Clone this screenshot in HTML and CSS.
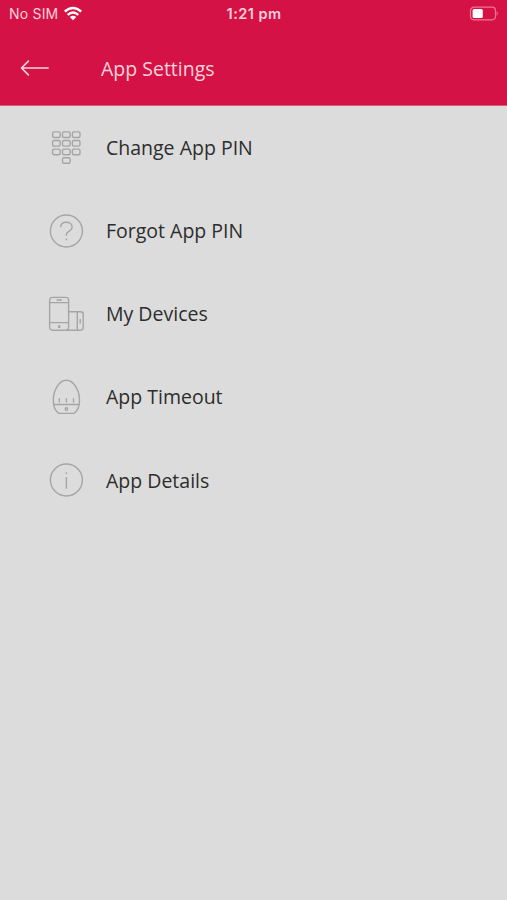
FILE: index.html
```html
<!DOCTYPE html>
<html lang="en">
<head>
<meta charset="utf-8">
<title>App Settings</title>
<link rel="stylesheet" href="styles.css">
</head>
<body>
<header class="header">
  <div class="status">
    <div class="carrier">
      <span>No SIM</span>
      <svg class="wifi" width="20" height="16" viewBox="0 0 20 16"><path d="M1.8 5.5Q10-1.5 18.2 5.5M4.7 8.8Q10 4.3 15.3 8.8" fill="none" stroke="currentColor" stroke-width="2.4"/><path d="M6.8 11.1Q10 8.6 13.2 11.1L10 14.3Z" fill="currentColor"/></svg>
    </div>
    <span class="time">1:21 pm</span>
    <svg class="battery" width="30" height="16" viewBox="0 0 30 16"><rect x="1.5" y="1.2" width="25" height="12.6" rx="3.5" fill="none" stroke="#ef7592" stroke-width="1.2"/><rect x="3.6" y="3.1" width="10.2" height="8.8" rx="1.5" fill="#fff"/><path d="M27.6 5.1Q30 7.5 27.6 9.9Z" fill="#ef7592"/></svg>
  </div>
  <div class="titlebar">
    <svg class="back" width="30" height="18" viewBox="0 0 30 18"><path d="M28 9H2M8.4 2.2L1.5 9l6.9 6.8" fill="none" stroke="currentColor" stroke-width="1.7" stroke-linecap="round" stroke-linejoin="round"/></svg>
    <h1 class="title">App Settings</h1>
  </div>
</header>
<main class="menu">
  <div class="row">
    <svg class="icon" viewBox="0 0 40 40"><g><rect x="6.6" y="3.9" width="7.6" height="5.6" rx="1.5"/><rect x="16.5" y="3.9" width="7.6" height="5.6" rx="1.5"/><rect x="26.4" y="3.9" width="7.6" height="5.6" rx="1.5"/><rect x="6.6" y="12.5" width="7.6" height="5.6" rx="1.5"/><rect x="16.5" y="12.5" width="7.6" height="5.6" rx="1.5"/><rect x="26.4" y="12.5" width="7.6" height="5.6" rx="1.5"/><rect x="6.6" y="21.1" width="7.6" height="5.6" rx="1.5"/><rect x="16.5" y="21.1" width="7.6" height="5.6" rx="1.5"/><rect x="26.4" y="21.1" width="7.6" height="5.6" rx="1.5"/><rect x="16.5" y="29.7" width="7.6" height="5.6" rx="1.5"/></g></svg>
    <span>Change App PIN</span>
  </div>
  <div class="row">
    <svg class="icon" viewBox="0 0 40 40"><circle cx="20.4" cy="20" r="16"/><path d="M14.7 16.2c0-3.3 2.6-4.9 5.7-4.9 3.3 0 5.7 1.9 5.7 4.7 0 4.5-5.7 4-5.7 7.5v1.2M20.4 27.4v1.8"/></svg>
    <span>Forgot App PIN</span>
  </div>
  <div class="row">
    <svg class="icon" viewBox="0 0 40 40"><rect x="3.6" y="3.4" width="19" height="32.8" rx="2.8"/><path d="M3.6 8.6h19M3.6 28.6h19M10.5 6h5.4M22.6 17.8h12a2.6 2.6 0 0 1 2.6 2.6v13.2a2.6 2.6 0 0 1-2.6 2.6H20M31.3 17.8v18.4M34.2 25v4.4"/><circle cx="13.2" cy="32.5" r=".8"/></svg>
    <span>My Devices</span>
  </div>
  <div class="row">
    <svg class="icon" viewBox="0 0 40 40"><path d="M13 36.4C9.2 34 7.3 29.4 7.3 23.8 7.3 12.8 13.3 3.3 20.4 3.3s13.1 9.5 13.1 20.5c0 5.6-1.9 10.2-5.7 12.6ZM8.3 27.5h24.2M13.3 21.2v4.2M20.4 21.2v4.2M27.5 21.2v4.2"/><circle cx="20.4" cy="32" r="1.2"/></svg>
    <span>App Timeout</span>
  </div>
  <div class="row">
    <svg class="icon" viewBox="0 0 40 40"><circle cx="20.4" cy="20" r="16"/><path d="M20.4 17v11.8M20.4 12.3v1.8"/></svg>
    <span>App Details</span>
  </div>
</main>
</body>
</html>
```
FILE: styles.css
```css
* {
  box-sizing: border-box;
}

body {
  margin: 0;
  min-height: 900px;
  background: #dcdcdc;
  font-family: "Open Sans", sans-serif;
  color: #2d2d2d;
}

.header {
  height: 106px;
  background: #d51245;
  border-bottom: 1px solid #dc5c7b;
  color: #fbd3dc;
}

.status {
  display: grid;
  grid-template-columns: 1fr auto 1fr;
  align-items: center;
  height: 27px;
  padding: 0 8px 0 9px;
  font-family: Inter, sans-serif;
  font-size: 14px;
}

.carrier {
  display: flex;
  align-items: center;
  gap: 5px;
  letter-spacing: 0.2px;
}

.wifi {
  color: #fff;
}

.time {
  font-weight: 600;
  font-size: 14.5px;
  letter-spacing: 0.45px;
}

.battery {
  justify-self: end;
}

.titlebar {
  display: flex;
  align-items: center;
  height: 82px;
  padding-left: 20px;
}

.back {
  margin-right: 51px;
}

.title {
  margin: 0;
  font-size: 19.5px;
  font-weight: 400;
}

.menu {
  display: flex;
  flex-direction: column;
}

.row {
  display: flex;
  align-items: center;
  height: 83.15px;
  padding-left: 46px;
  gap: 20px;
  font-size: 19.5px;
}

.icon {
  width: 40px;
  height: 40px;
  fill: none;
  stroke: #a5a5a5;
  stroke-width: 1.4;
}
```
